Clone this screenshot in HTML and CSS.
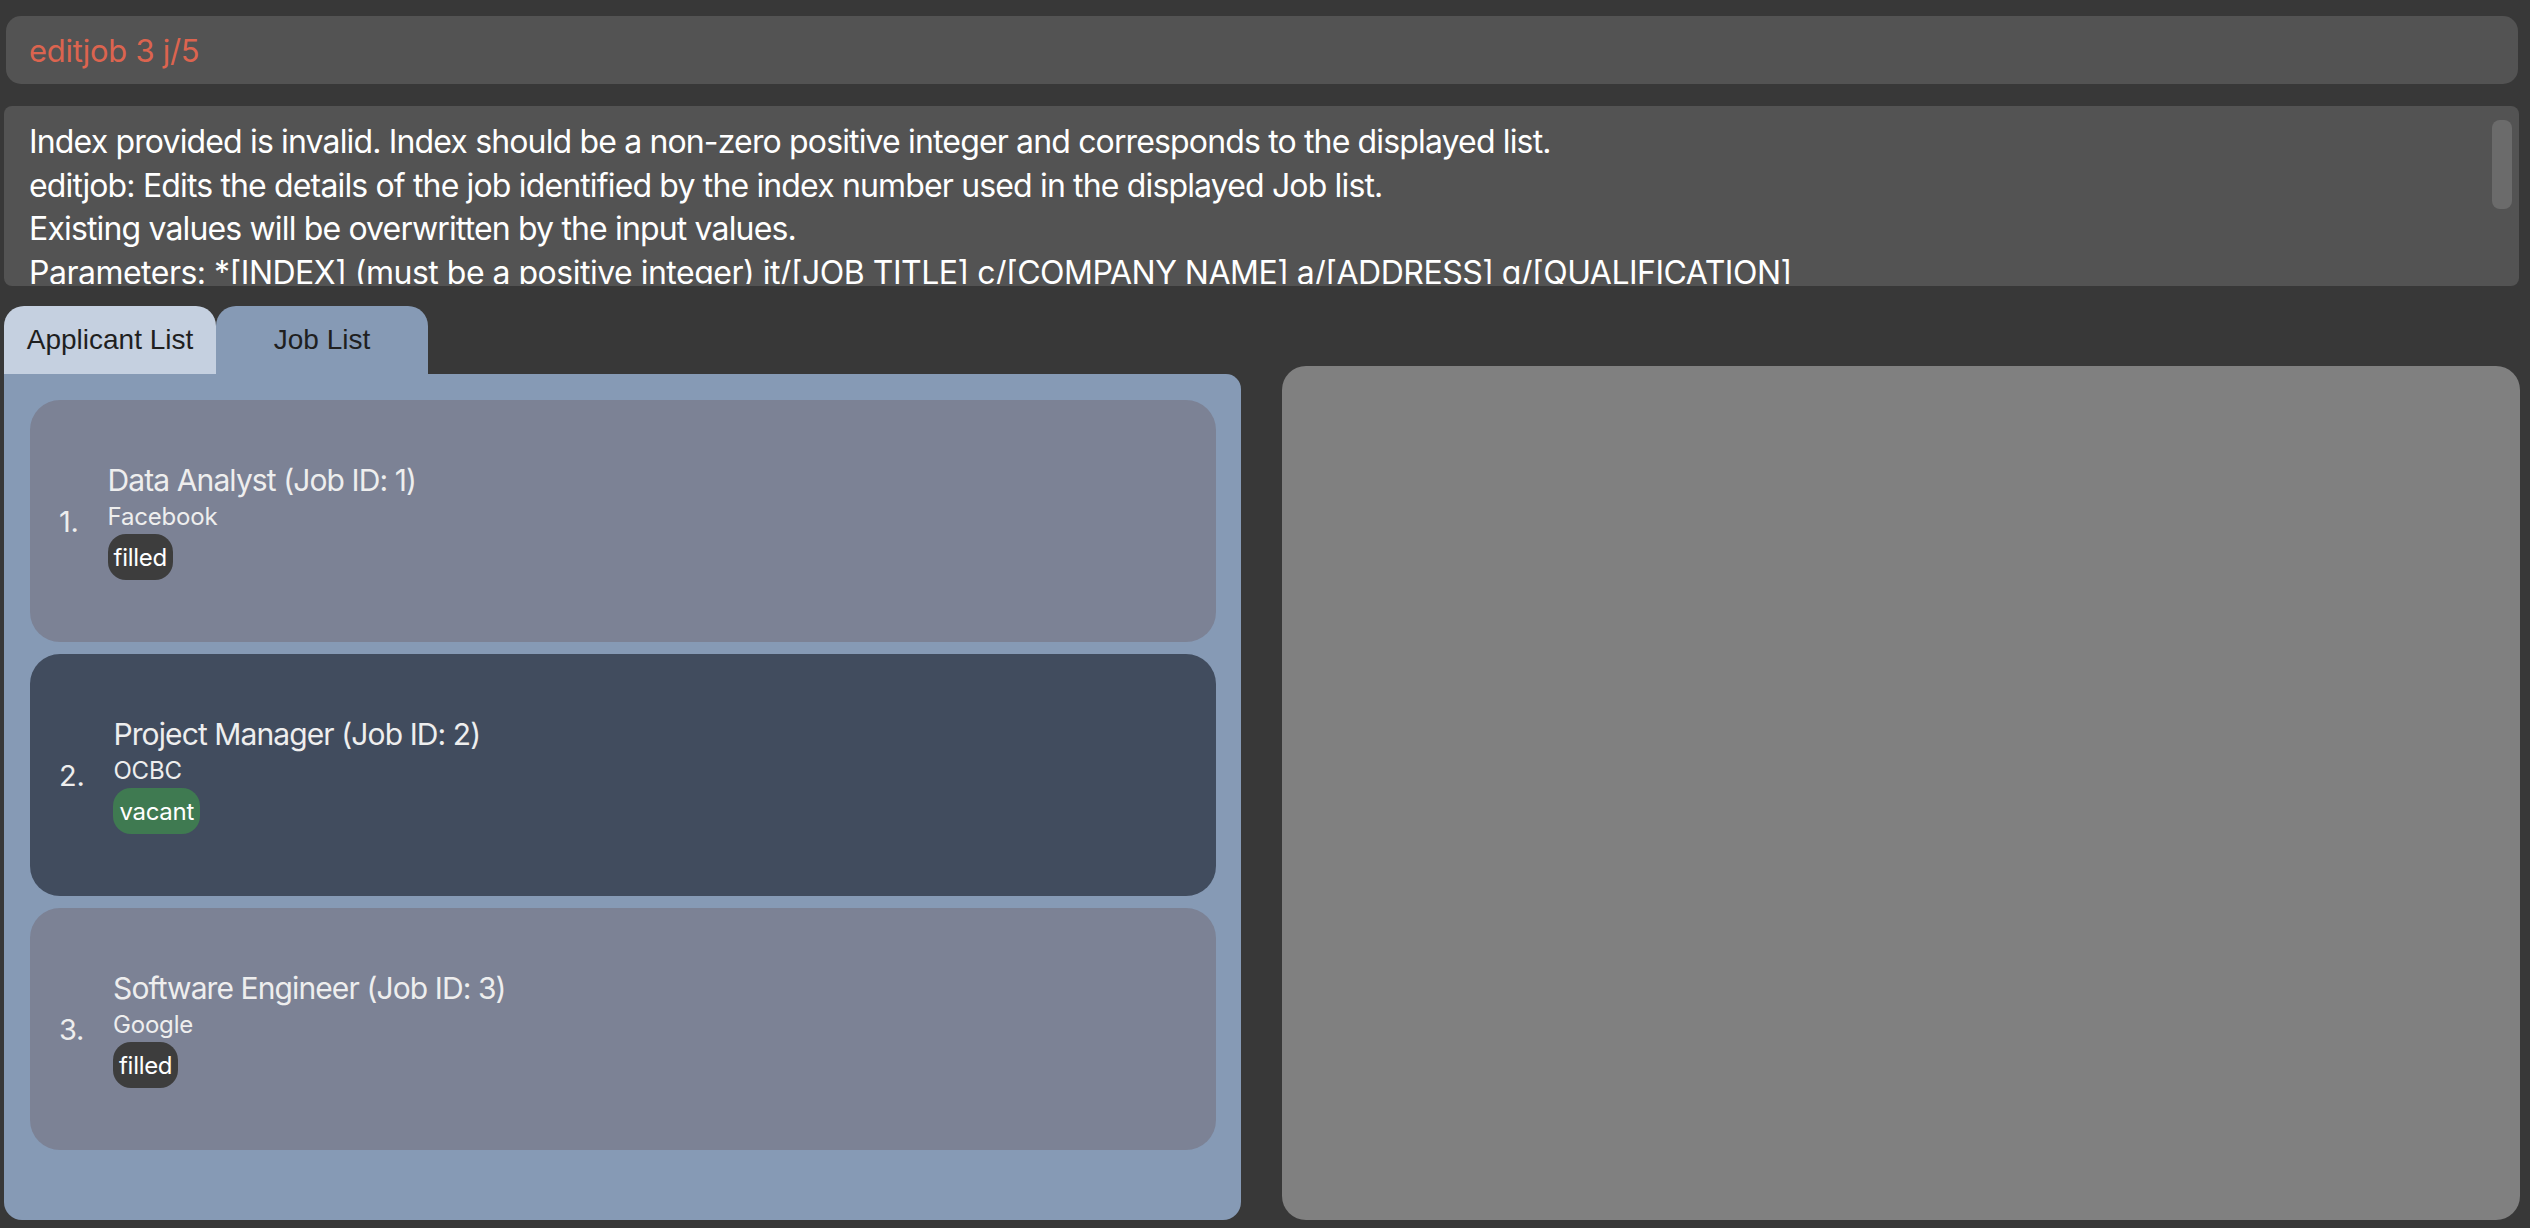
FILE: index.html
```html
<!DOCTYPE html>
<html lang="en">
<head>
<meta charset="utf-8">
<title>Job List</title>
<link rel="stylesheet" href="styles.css">
</head>
<body>
<div class="app">
  <div class="command">editjob 3 j/5</div>
  <div class="result">
    <div class="result-text">
      <div>Index provided is invalid. Index should be a non-zero positive integer and corresponds to the displayed list.</div>
      <div>editjob: Edits the details of the job identified by the index number used in the displayed Job list.</div>
      <div>Existing values will be overwritten by the input values.</div>
      <div class="caps-line">Parameters: *[INDEX] (must be a positive integer) jt/[JOB TITLE] c/[COMPANY NAME] a/[ADDRESS] q/[QUALIFICATION]</div>
    </div>
    <div class="scrollbar"></div>
  </div>
  <div class="main">
    <div class="list-col">
      <div class="tabs">
        <div class="tab tab-inactive">Applicant List</div>
        <div class="tab tab-active">Job List</div>
      </div>
      <div class="list-panel">
        <div class="card">
          <div class="index">1.</div>
          <div class="info">
            <div class="title">Data Analyst (Job ID: 1)</div>
            <div class="company">Facebook</div>
            <div class="badge badge-filled">filled</div>
          </div>
        </div>
        <div class="card card-selected">
          <div class="index">2.</div>
          <div class="info">
            <div class="title">Project Manager (Job ID: 2)</div>
            <div class="company">OCBC</div>
            <div class="badge badge-vacant">vacant</div>
          </div>
        </div>
        <div class="card">
          <div class="index">3.</div>
          <div class="info">
            <div class="title">Software Engineer (Job ID: 3)</div>
            <div class="company">Google</div>
            <div class="badge badge-filled">filled</div>
          </div>
        </div>
      </div>
    </div>
    <div class="detail-panel"></div>
  </div>
</div>
</body>
</html>
```
FILE: styles.css
```css
html, body {
  margin: 0;
  padding: 0;
}

body {
  background: #383838;
  font-family: Inter, "Noto Sans", "Liberation Sans", sans-serif;
  width: 2530px;
  height: 1228px;
  overflow: hidden;
}

.app {
  padding-top: 16px;
}

.command {
  margin: 0 12px 0 6px;
  height: 68px;
  box-sizing: border-box;
  padding-left: 23px;
  background: #535353;
  border-radius: 15px;
  display: flex;
  align-items: center;
  color: #dc644f;
  font-size: 31px;
  letter-spacing: -0.3px;
}

.result {
  position: relative;
  margin: 22px 11px 0 4px;
  height: 180px;
  box-sizing: border-box;
  padding: 14px 0 0 25px;
  background: #535353;
  border-radius: 8px;
}

.result-text {
  height: 164px;
  overflow: hidden;
  color: #ffffff;
  font-size: 32px;
  line-height: 43.6px;
  letter-spacing: -0.85px;
  white-space: nowrap;
}

.caps-line {
  letter-spacing: -0.5px;
}

.scrollbar {
  position: absolute;
  right: 7px;
  top: 14px;
  width: 20px;
  height: 89px;
  background: #6b6b6b;
  border-radius: 8px;
}

.main {
  display: flex;
  gap: 41px;
  margin: 20px 10px 0 4px;
  height: 914px;
}

.list-col {
  width: 1237px;
  display: flex;
  flex-direction: column;
}

.tabs {
  display: flex;
  height: 68px;
  flex: none;
}

.tab {
  width: 212px;
  display: flex;
  align-items: center;
  justify-content: center;
  border-radius: 20px 20px 0 0;
  font-family: "Liberation Sans", Arial, sans-serif;
  font-size: 28px;
  color: #1f1f1f;
}

.tab-inactive {
  background: #c5d0e0;
}

.tab-active {
  background: #869ab5;
}

.list-panel {
  flex: 1;
  background: #869ab5;
  border-radius: 0 15px 18px 18px;
  padding: 26px 25px 0 26px;
  display: flex;
  flex-direction: column;
  gap: 12px;
}

.card {
  height: 242px;
  flex: none;
  border-radius: 30px;
  background: #7c8295;
  display: flex;
  align-items: center;
  padding-left: 29px;
  gap: 29px;
  color: #eeeeee;
}

.card-selected {
  background: #414c5e;
}

.index {
  font-size: 29px;
  letter-spacing: -0.3px;
}

.info {
  display: flex;
  flex-direction: column;
  align-items: flex-start;
}

.title {
  font-size: 30px;
  line-height: 36px;
  letter-spacing: -0.9px;
}

.company {
  margin-top: 5px;
  font-size: 24px;
  line-height: 28px;
  letter-spacing: -0.2px;
}

.badge {
  margin-top: 3px;
  height: 46px;
  box-sizing: border-box;
  padding: 0 6px;
  display: flex;
  align-items: center;
  border-radius: 18px;
  font-size: 24px;
  letter-spacing: -0.3px;
  color: #ffffff;
}

.badge-filled {
  background: #3d3d3d;
}

.badge-vacant {
  background: #3f7a51;
}

.detail-panel {
  flex: 1;
  margin-top: 60px;
  background: #808080;
  border-radius: 24px;
}
```
